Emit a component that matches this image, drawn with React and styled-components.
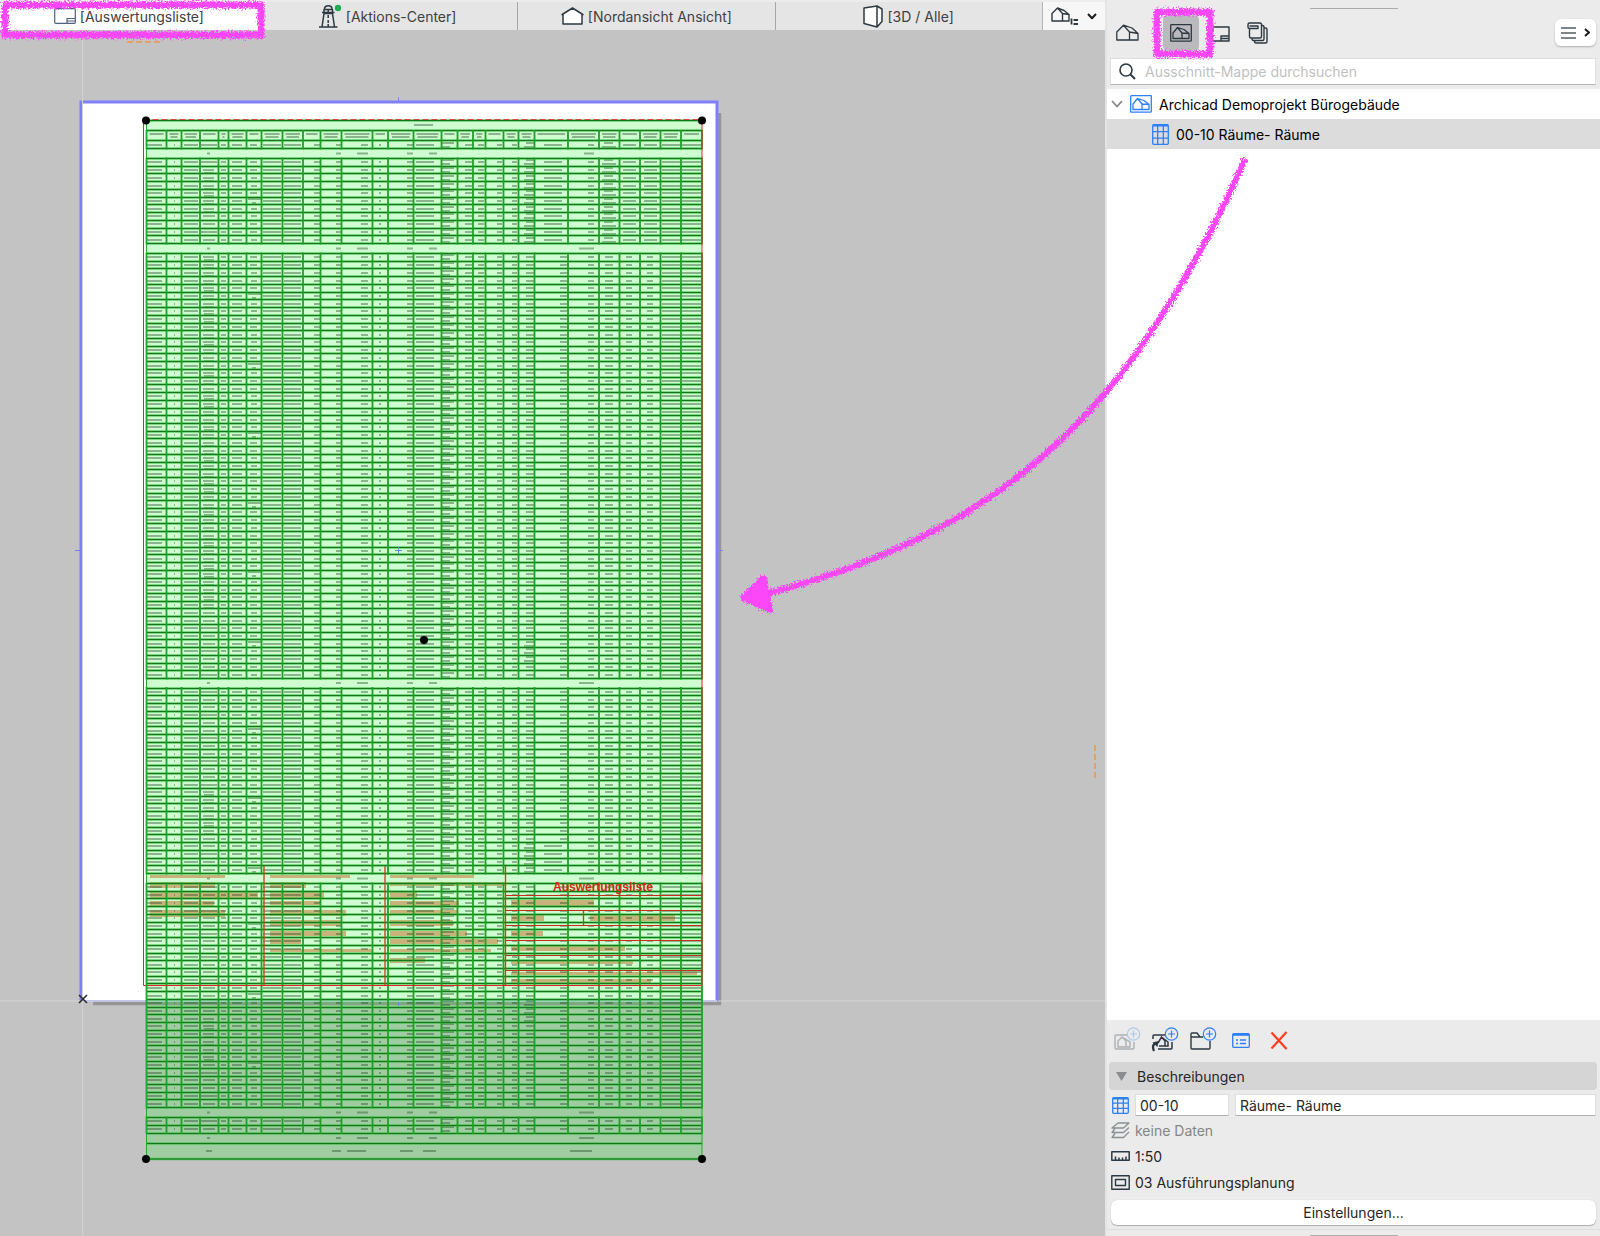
import styled, { createGlobalStyle } from "styled-components";

const GlobalStyle = createGlobalStyle`
  * {
    box-sizing: border-box;
  }
  body {
    margin: 0;
    background: #ebebeb;
    font-family: Inter, "Liberation Sans", sans-serif;
    font-size: 14px;
    color: #262626;
  }
  button, input {
    font: inherit;
    color: inherit;
  }
  svg {
    display: block;
    flex-shrink: 0;
  }
`

const Page = styled.div`
  position: relative;
  display: flex;
  min-height: 100vh;
  overflow: hidden;
`
const Workspace = styled.main`
  display: flex;
  flex-direction: column;
  flex: 1;
  min-width: 0;
  background: #c3c3c3;
`
const TabBar = styled.nav`
  display: flex;
  height: 30px;
  padding-top: 2px;
  background: #ececec;
`
const Tab = styled.button`
  display: flex;
  align-items: center;
  justify-content: center;
  gap: 4px;
  flex: 1 1 ${(p) => (p.$plain ? 8 : 0)}px;
  border: 0;
  border-right: 1px solid ${(p) => (p.$active || p.$plain ? "transparent" : "#a6a6a6")};
  background: ${(p) => (p.$active ? "#fff" : "#e5e5e5")};
  color: #404040;
  padding: 0;
`
const ViewMenu = styled.button`
  display: flex;
  align-items: center;
  justify-content: center;
  gap: 8px;
  width: 63px;
  border: 0;
  border-left: 1px solid #b4b4b4;
  background: #f7f7f7;
  padding: 0;
`
const Sheet = styled.div`
  flex: 1;
  display: flex;
  overflow: hidden;
  svg {
    flex: 1;
  }
`
const Sidebar = styled.aside`
  display: flex;
  flex-direction: column;
  width: 495px;
  border-left: 2px solid #e4e4e4;
  background: #ebebeb;
`
const Grip = styled.div`
  width: 88px;
  height: 1px;
  margin: ${(p) => (p.$bottom ? "5px" : "8px")} auto 0;
  background: #ababab;
`
const MapBar = styled.div`
  display: flex;
  align-items: center;
  height: 49px;
  padding: 0 4px 2px 2px;
`
const MapButton = styled.button`
  display: flex;
  align-items: center;
  justify-content: center;
  width: 36px;
  height: 36px;
  margin-right: ${(p) => (p.$first ? 18 : 2)}px;
  padding: 0;
  border: 0;
  border-radius: 5px;
  background: ${(p) => (p.$active ? "#bab9be" : "transparent")};
`
const MenuButton = styled.button`
  display: flex;
  align-items: center;
  justify-content: center;
  gap: 8px;
  width: 41px;
  height: 27px;
  margin-left: auto;
  padding: 0;
  border: 0;
  border-radius: 6px;
  background: #fff;
  box-shadow: 0 1px 2px rgba(0, 0, 0, 0.25);
`
const SearchBox = styled.label`
  display: flex;
  align-items: center;
  gap: 9px;
  height: 27px;
  margin: 0 4px 4px 3px;
  padding-left: 8px;
  background: #fff;
  border: 1px solid #dedede;
  border-bottom-color: #b4b4b4;
  input {
    flex: 1;
    border: 0;
    outline: 0;
    padding: 0;
    background: transparent;
  }
  input::placeholder {
    color: #bfbfbf;
    opacity: 1;
  }
`
const Tree = styled.ul`
  flex: 1;
  margin: 0;
  padding: 0;
  list-style: none;
  background: #fff;
`
const TreeRow = styled.li`
  display: flex;
  align-items: center;
  gap: 7px;
  height: 30px;
  padding-left: ${(p) => (p.$child ? 45 : 4)}px;
  background: ${(p) => (p.$selected ? "#dcdcdc" : "#fff")};
  color: #000;
`
const ActionBar = styled.div`
  display: flex;
  align-items: center;
  gap: 10px;
  height: 42px;
  padding: 0 0 2px 6px;
`
const ActionButton = styled.button`
  display: flex;
  align-items: center;
  justify-content: center;
  width: 28px;
  height: 28px;
  padding: 0;
  border: 0;
  background: transparent;
`
const SectionHead = styled.button`
  display: flex;
  align-items: center;
  gap: 10px;
  height: 28px;
  margin: 0 3px 4px 2px;
  padding: 0 7px;
  border: 0;
  border-radius: 4px;
  background: #d5d5d5;
`
const FieldRow = styled.div`
  display: flex;
  align-items: center;
  gap: 6px;
  height: 22px;
  margin: 0 4px 1px 5px;
`
const Field = styled.input`
  flex: ${(p) => (p.$wide ? "1" : "0 0 94px")};
  min-width: 0;
  height: 22px;
  padding: 0 4px;
  border: 1px solid #dedede;
  border-bottom-color: #b0b0b0;
  outline: 0;
  background: #fff;
`
const InfoRow = styled.div`
  display: flex;
  align-items: center;
  gap: 5px;
  height: 26px;
  padding-left: 4px;
  color: ${(p) => (p.$muted ? "#858585" : "#262626")};
`
const SettingsButton = styled.button`
  height: 25px;
  margin: 5px 4px 4px;
  border: 0;
  border-radius: 6px;
  background: #fff;
  box-shadow: 0 1px 1px rgba(0, 0, 0, 0.25), 0 0 1px rgba(0, 0, 0, 0.2);
`
const PanelEnd = styled.div`
  height: 7px;
  border-top: 1px solid #dedede;
`
const Marker = styled.svg`
  position: absolute;
  top: 0;
  left: 0;
  width: 100%;
  height: 100%;
  pointer-events: none;
`

const DARK = "#2d3940"
const BLUE = "#2f7ff5"

const Icon = ({ w, h, color = DARK, sw = 1.3, children }) => (
  <svg width={w} height={h} viewBox={`0 0 ${w} ${h}`} fill="none" stroke={color} strokeWidth={sw} strokeLinejoin="round">
    {children}
  </svg>
)

const HouseIcon = () => (
  <Icon w={23} h={17}>
    <path d="M.8 16V8L7.5 1.2 13.5 8V16ZM.8 16H22V9.5L16 4 7.5 1.2M13.5 8 22 9.5M13.5 8 7.5 1.2M13.5 16H22" />
  </Icon>
)

const FramedHouse = ({ color }) => (
  <Icon w={22} h={18} color={color} sw={1.3}>
    <rect x="0.7" y="0.7" width="20.6" height="16.4" rx="0.5" />
    <path d="M3 14.5V9L7.5 3.5 12 9V14.5ZM7.5 3.5 14 5.5 19 9.5V14.5H12M12 9 19 9.5" />
  </Icon>
)

const LayoutIcon = ({ color }) => (
  <Icon w={22} h={16} color={color} sw={1.2}>
    <rect x="0.7" y="0.7" width="20.6" height="14.6" rx="1" />
    <path d="M13 15V10.5H21M13 13H21" />
  </Icon>
)

const TableIcon = ({ w = 17, h = 21 }) => (
  <Icon w={w} h={h} color={BLUE} sw={1.3}>
    <rect x="0.7" y="0.7" width={w - 1.4} height={h - 1.4} rx="1" />
    <path d={`M1 1.5H${w - 1}`} strokeWidth="2" />
    <path d={`M${w / 3} 1V${h - 1}M${(w * 2) / 3} 1V${h - 1}M1 ${h * 0.36}H${w - 1}M1 ${h * 0.67}H${w - 1}`} />
  </Icon>
)

const Plus = ({ cx, cy }) => (
  <g stroke={BLUE} strokeWidth="1.2">
    <circle cx={cx} cy={cy} r="6.2" fill="#ebebeb" />
    <path d={`M${cx - 3.5} ${cy}H${cx + 3.5}M${cx} ${cy - 3.5}V${cy + 3.5}`} />
  </g>
)

// column borders of the room schedule
const COLS = [146.5, 166.5, 181.5, 200, 218.5, 228.5, 246.5, 261.5, 282.5, 303, 320.5, 341.5, 372.5, 388, 413.5, 441.5, 457.5, 473, 485.5, 503.5, 518.5, 534.5, 568, 599, 619.5, 640, 660.5, 681, 702]
// blocks of rows: top, bottom, number of rows
const BLOCKS = [
  [158.5, 243.5, 11],
  [253.5, 678.5, 55],
  [688, 873.5, 24],
  [883.5, 1107.5, 29],
  [1117.5, 1133, 2],
]
// text position in every column
const CELLS = [[147, 162], [174, 175], [184, 198], [203, 215], [221, 226], [232, 242], [251, 257], [263, 281], [284, 301], [314, 320], [336, 341], [361, 368], [379, 381], [407, 413], [416, 434], [442, 455], [465, 472], [478, 484], [497, 502], [512, 517], [526, 534], [560, 567], [588, 594], [605, 613], [626, 632], [647, 653], [662, 681], [682, 702]]
const DENSE = [[165, 215], [255, 607], [785, 835], [1015, 1060]]

const inRange = (y, ranges) => ranges.some(([a, b]) => y > a && y < b)

const hLines = []
const vLines = []
const texts = []
const bar = (x0, x1, y, h = 2) => texts.push(`M${x0} ${y - h / 2}H${x1}V${y + h / 2}H${x0}Z`)

const addBlock = (top, bottom, rows) => {
  const step = (bottom - top) / rows
  for (let i = 0; i <= rows; i++) hLines.push(`M147 ${Math.floor(top + i * step) + 0.5}H702`)
  COLS.forEach((x) => vLines.push(`M${x} ${top - 1}V${bottom + 1}`))
  for (let i = 0; i < rows; i++) {
    const y = Math.round(top + (i + 0.5) * step)
    CELLS.forEach(([a, b], c) => {
      if (c === 3) {
        if (inRange(y, DENSE)) {
          bar(203, 214, y, 2)
          bar(204, 214, y + 3, 2)
        } else bar(i % 3 ? 203 : 201, i % 3 ? 215 : 217, y)
      } else if (c === 15) {
        bar(442, 454, y - 2, 2)
        bar(442, 450, y + 2, 2)
      } else if (c === 20 && (top < 200 || inRange(y, [[640, 665], [845, 875], [1000, 1020]]))) {
        bar(526, 534, y - 2, 2)
        bar(524, 534, y + 2, 2)
      } else if (c === 21 && (top < 200 || inRange(y, [[845, 875]]))) bar(544, 562, y)
      else if (c === 23 && top < 200) {
        bar(604, 613, y - 2, 2)
        bar(602, 616, y + 2, 2)
      } else if ((c === 24 || c === 25) && top < 200) bar(a - 3, b + 4, y)
      else if (c === 6 && i % 9 === 5) {
        bar(248, 261, y - 2, 2)
        bar(252, 256, y + 2, 2)
      } else bar(c === 6 && i % 4 < 2 ? a - 1 : a, b, y)
    })
  }
}

hLines.push("M147 120.5H702M147 1143.5H702M147 1159H702")
addBlock(140.5, 148.5, 1)
BLOCKS.forEach((b) => addBlock(...b))
hLines.push("M147 130.5H702")
COLS.forEach((x) => vLines.push(`M${x} 130V141`))
bar(414, 433, 125)
COLS.slice(0, -1).forEach((x, i) => {
  const end = COLS[i + 1]
  bar(x + 3, end - 3, 134)
  if (i % 3) bar(x + 4, end - 4, 137)
})
;[153.5, 248.5, 683, 878.5, 1112.5, 1138].forEach((y) => {
  bar(207, 210, y)
  bar(336, 341, y)
  bar(357, 368, y)
  bar(407, 413, y)
  bar(429, 437, y)
  bar(y === 153.5 ? 584 : 579, 594, y)
})
// totals
;[[206, 212], [332, 341], [347, 366], [400, 413], [423, 436], [570, 592]].forEach(([a, b]) => bar(a, b, 1151))

// greeked text of the title block
const NOTES = [
  [150, 225, 875, 878], [150, 215, 882, 888], [150, 258, 892, 898], [150, 214, 901, 906], [150, 225, 910, 917],
  [270, 350, 875, 878], [270, 306, 882, 888], [270, 324, 892, 898], [270, 321, 901, 905], [270, 346, 910, 916], [270, 341, 920, 926], [270, 346, 931, 936], [270, 301, 939, 944], [270, 373, 949, 952],
  [390, 474, 875, 878], [390, 506, 882, 886], [390, 417, 892, 898], [390, 459, 901, 906], [390, 457, 910, 914], [390, 453, 920, 926], [390, 467, 931, 936], [390, 498, 939, 944], [390, 491, 949, 952], [390, 425, 958, 963],
  [511, 594, 900, 906], [511, 544, 915, 921], [590, 675, 915, 921], [511, 543, 931, 936], [511, 625, 946, 951], [511, 633, 961, 964], [511, 697, 972, 975], [511, 651, 979, 983],
]
const DOTS = [[146, 120.5], [702, 120.5], [424, 640], [146, 1159], [702, 1159]]

const Drawing = () => (
  <svg width="100%">
    <g transform="translate(0 -30)">
      <path d="M93 1003.5H721M719.5 113V1004" stroke="#969696" strokeWidth="3.5" />
      <rect x="81.5" y="102" width="636" height="899" fill="#fff" />
      <path d="M81 1001V102H717V1001" fill="none" stroke="#8080ff" strokeWidth="3" />
      <path d="M82 1001H717" stroke="#c4c6e8" strokeWidth="2" />
      <path d="M82.5 30V1236" stroke="#d2d2d2" />
      <path d="M0 1001H81M718 1001H1105" stroke="#d6d6d6" />
      <path d="M398.5 97V102M75 550.5H81M718 550.5H723" stroke="#8080ff" />

      {NOTES.map(([x0, x1, y0, y1]) => (
        <rect key={`${x0}-${y0}`} x={x0} y={y0} width={x1 - x0} height={y1 - y0} fill="#f6a492" />
      ))}
      <rect x="146" y="120" width="556" height="1039" fill="rgb(20,240,30)" fillOpacity="0.2" />
      <path d={texts.join("")} fill="#1e4a24" fillOpacity="0.4" />
      <path d={hLines.join("")} stroke="#2fb938" strokeWidth="2.4" strokeOpacity="0.7" />
      <path d={hLines.join("")} stroke="#15761d" strokeWidth="1" />
      <path d={vLines.join("")} stroke="#1ea027" strokeWidth="1.8" />
      <text x="603" y="891" textAnchor="middle" fontFamily="Liberation Sans, sans-serif" fontSize="12" fontWeight="700" fill="#d42812">Auswertungsliste</text>

      <path d="M143.5 119.5V985.5H702V119.5" fill="none" stroke="#e8222a" />
      <path d="M143.5 119.5H702" stroke="#e8222a" strokeWidth="0.8" strokeDasharray="6 3" />
      <path d="M264 866V985M385 866V985M505.5 866V985M583.5 910V925" stroke="#cf3a1c" strokeWidth="1.3" />
      <path d="M506 895.5H702M506 910.5H702M506 925.5H702M506 940.5H702M506 955.5H702M506 970.5H702" stroke="#c0301a" />
      <path d="M146.5 120V1159M702 985V1159" stroke="#22a92b" strokeWidth="1" />
      <path d="M395 550.5H402M398.5 547V554M398.5 1002V1006" stroke="#5f8fd0" />

      {DOTS.map(([x, y]) => <circle key={`${x}-${y}`} cx={x} cy={y} r="4" fill="#000" />)}
      <path d="M79 995 87 1003M87 995 79 1003" stroke="#2c2c2c" strokeWidth="1.6" />
      <path d="M127 42H160" stroke="#e5a063" strokeWidth="2" strokeDasharray="6 3" />
      <path d="M1095 745V779" stroke="#e5a063" strokeWidth="2" strokeDasharray="6 3" />
    </g>
  </svg>
)

function App() {
  return (
    <Page>
      <GlobalStyle />
      <Workspace>
        <TabBar>
          <Tab $active>
            <LayoutIcon color="#50617d" />
            [Auswertungsliste]
          </Tab>
          <Tab>
            <Icon w={23} h={24} sw={1.5}>
              <path d="M0 23H18.5M3 23 5 9.5H13.5L15.5 23M3 8.5H15.5M5 8V5.5H13.5V8M5.5 5C5.5 .5 13 .5 13 5M9.2 5V8" />
              <path d="M9.2 11V14M9.2 16V19M9.2 20V23" />
              <circle cx="19" cy="4" r="3.2" fill="#22ab50" stroke="none" />
            </Icon>
            [Aktions-Center]
          </Tab>
          <Tab>
            <Icon w={23} h={18} sw={1.5}>
              <path d="M2 17V7L11.5 1 21 7V17ZM.5 7.8 2 7M22.5 7.8 21 7" fill="#fff" />
            </Icon>
            [Nordansicht Ansicht]
          </Tab>
          <Tab $plain>
            <Icon w={20} h={23} sw={1.5}>
              <path d="M1 3 14 1V22L1 18.5ZM14 1 19 4V16.5L14 22" fill="#fff" />
            </Icon>
            [3D / Alle]
          </Tab>
          <ViewMenu aria-label="Ansicht">
            <Icon w={28} h={18} sw={1.4}>
              <path d="M1 14V6.5L6.5 1 11.5 6.5V14ZM6.5 1 13 3.5 18 7.5V14H11.5M11.5 6.5 18 7.5" />
              <path d="M20.5 11.5V17.5M22.5 13H27M22.5 17H27" strokeWidth="1.8" />
            </Icon>
            <Icon w={10} h={7} sw={2} color="#1c1c1c"><path d="M1 1 5 5.2 9 1" /></Icon>
          </ViewMenu>
        </TabBar>
        <Sheet>
          <Drawing />
        </Sheet>
      </Workspace>

      <Sidebar>
        <Grip />
        <MapBar>
          <MapButton $first aria-label="Projekt-Mappe"><HouseIcon /></MapButton>
          <MapButton $active aria-label="Ausschnitt-Mappe"><FramedHouse color={DARK} /></MapButton>
          <MapButton aria-label="Layoutbuch">
            <Icon w={22} h={20} sw={1.4}>
              <path d="M4 1V14C4 16 1 16 1 13V4C1 2 4 0 4 3M4 4H21V18H4M13 18V13H21M13 15.5H21" />
            </Icon>
          </MapButton>
          <MapButton aria-label="Publisher-Sets">
            <Icon w={21} h={22} sw={1.4}>
              <path d="M2.5 6.5V14.5Q2.5 16 4 16H13Q14.5 16 14.5 14.5V2.5Q14.5 1 13 1H2.5Q1 1 1 3V5Q1 6.5 2.5 6.5H11V4H2.5" />
              <path d="M14.5 3.5H15.5Q17 3.5 17 5V17Q17 18.5 15.5 18.5H6.5Q5 18.5 5 16.5M17 6H18.5Q20 6 20 7.5V19.5Q20 21 18.5 21H9Q7.5 21 7.5 19" />
            </Icon>
          </MapButton>
          <MenuButton aria-label="Menü">
            <Icon w={15} h={12} sw={1.5} color="#565e64"><path d="M0 1H15M0 6H15M0 11H15" /></Icon>
            <Icon w={6} h={9} sw={2} color="#1c1c1c"><path d="M1 1 5 4.5 1 8" /></Icon>
          </MenuButton>
        </MapBar>
        <SearchBox>
          <Icon w={17} h={17} sw={1.6}>
            <circle cx="7" cy="7" r="6" />
            <path d="M11.5 11.5 16 16" strokeWidth="2" />
          </Icon>
          <input type="text" aria-label="Suche" placeholder="Ausschnitt-Mappe durchsuchen" />
        </SearchBox>
        <Tree>
          <TreeRow>
            <Icon w={12} h={8} sw={1.8} color="#858585"><path d="M1 1 6 6.5 11 1" /></Icon>
            <FramedHouse color={BLUE} />
            Archicad Demoprojekt Bürogebäude
          </TreeRow>
          <TreeRow $child $selected>
            <TableIcon />
            00-10 Räume- Räume
          </TreeRow>
        </Tree>
        <ActionBar>
          <ActionButton aria-label="Ausschnitt sichern" disabled>
            <svg width="28" height="26" viewBox="0 0 28 26" fill="none" opacity="0.32">
              <path d="M14 8H3Q2 8 2 9V21Q2 22 3 22H20Q21 22 21 21V15M5 20V14L9 10 13 14V20ZM9 10 17 15V20H13" stroke={DARK} strokeWidth="1.4" />
              <Plus cx={20.5} cy={7} />
            </svg>
          </ActionButton>
          <ActionButton aria-label="Ausschnitt klonen">
            <svg width="28" height="26" viewBox="0 0 28 26" fill="none">
              <path d="M14 8H3Q2 8 2 9V12M7 22H20Q21 22 21 21V15M7 16 10.5 10 14 14V19H8M10.5 10 17 15V19H14" stroke={DARK} strokeWidth="1.5" />
              <path d="M3 24C1 20 2 17 5 16" stroke={DARK} strokeWidth="2.4" />
              <path d="M1.5 15.5 7.5 14 6.5 20Z" fill={DARK} />
              <Plus cx={20.5} cy={7} />
            </svg>
          </ActionButton>
          <ActionButton aria-label="Neuer Ordner">
            <svg width="28" height="26" viewBox="0 0 28 26" fill="none">
              <path d="M2 11V7Q2 6 3 6H8L11 10H14M2 10H11M2 10V21Q2 22 3 22H20Q21 22 21 21V14" stroke={DARK} strokeWidth="1.4" />
              <Plus cx={20.5} cy={7} />
            </svg>
          </ActionButton>
          <ActionButton aria-label="Ausschnitt-Einstellungen">
            <Icon w={18} h={15} color={BLUE}>
              <rect x="0.7" y="0.7" width="16.6" height="13.6" rx="1" />
              <path d="M1 1.8H17" strokeWidth="2" />
              <path d="M4 7H6M8 7H14M4 10.5H6M8 10.5H14" />
            </Icon>
          </ActionButton>
          <ActionButton aria-label="Löschen">
            <Icon w={18} h={19} color="#fc3d21" sw={2.2}><path d="M1.5 1.5 16.5 18M16.5 1 1.5 17.5" /></Icon>
          </ActionButton>
        </ActionBar>
        <SectionHead>
          <svg width="11" height="9"><path d="M0 0H11L5.5 9Z" fill="#8a8d90" /></svg>
          Beschreibungen
        </SectionHead>
        <FieldRow>
          <TableIcon w={17} h={17} />
          <Field aria-label="ID" defaultValue="00-10" />
          <Field $wide aria-label="Name" defaultValue="Räume- Räume" />
        </FieldRow>
        <InfoRow $muted>
          <Icon w={19} h={17} color="#8c8f91" sw={1.3}>
            <path d="M7 1H18L12.5 6H1ZM4 6.5 1 10.5H12.5L18 5.5M4 11.5 1 15.5H12.5L18 10" />
          </Icon>
          keine Daten
        </InfoRow>
        <InfoRow>
          <Icon w={19} h={10} sw={1.5}>
            <rect x="0.8" y="0.8" width="17.4" height="8.4" />
            <path d="M4.5 9V5.5M8 9V6.5M11.5 9V6.5M15 9V5.5" />
          </Icon>
          1:50
        </InfoRow>
        <InfoRow>
          <Icon w={19} h={15} sw={1.4}>
            <rect x="0.8" y="0.8" width="17.4" height="13.4" />
            <rect x="4.5" y="4.5" width="10" height="6" />
          </Icon>
          03 Ausführungsplanung
        </InfoRow>
        <SettingsButton>Einstellungen...</SettingsButton>
        <PanelEnd>
          <Grip $bottom />
        </PanelEnd>
      </Sidebar>

      <Marker>
        <defs>
          <filter id="crayon" x="0" y="0" width="100%" height="100%" filterUnits="userSpaceOnUse">
            <feTurbulence type="fractalNoise" baseFrequency="0.6" numOctaves="2" seed="4" />
            <feDisplacementMap in="SourceGraphic" scale="8" xChannelSelector="R" yChannelSelector="G" />
          </filter>
        </defs>
        <g fill="none" stroke="#fc46f8" strokeWidth="7" strokeLinecap="round" strokeLinejoin="round" filter="url(#crayon)">
          <path d="M5 5H261V35H5Z" />
          <path d="M1157 12H1210V54H1157Z" />
          <path d="M1244 161C1216 226 1166 321 1106 392 1031 481 931 551 769 593" strokeWidth="6" />
          <path d="M743 598 764 578 770 610Z" fill="#fc46f8" strokeWidth="6" />
        </g>
      </Marker>
    </Page>
  )
}

export default App;
